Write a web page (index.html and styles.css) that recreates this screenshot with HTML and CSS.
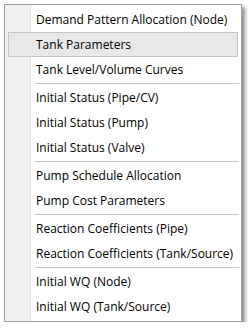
FILE: index.html
```html
<!DOCTYPE html>
<html lang="en">
<head>
  <meta charset="UTF-8" />
  <title>Context menu</title>
  <link rel="stylesheet" href="styles.css">
</head>
<body>
  <div class="menu" role="menu">
    <div class="item" role="menuitem">Demand Pattern Allocation (Node)</div>
    <div class="item active" role="menuitem">Tank Parameters</div>
    <div class="item" role="menuitem">Tank Level/Volume Curves</div>
    <div class="sep"></div>
    <div class="item" role="menuitem">Initial Status (Pipe/CV)</div>
    <div class="item" role="menuitem">Initial Status (Pump)</div>
    <div class="item" role="menuitem">Initial Status (Valve)</div>
    <div class="sep"></div>
    <div class="item" role="menuitem">Pump Schedule Allocation</div>
    <div class="item" role="menuitem">Pump Cost Parameters</div>
    <div class="sep"></div>
    <div class="item" role="menuitem">Reaction Coefficients (Pipe)</div>
    <div class="item" role="menuitem">Reaction Coefficients (Tank/Source)</div>
    <div class="sep"></div>
    <div class="item" role="menuitem">Initial WQ (Node)</div>
    <div class="item" role="menuitem">Initial WQ (Tank/Source)</div>
  </div>
</body>
</html>
```

FILE: styles.css
```css
body {
  margin: 4px;
  background: #fff;
  font-family: 'Open Sans', sans-serif;
  font-size: 12px;
  color: #000;
}
.menu {
  width: 232px;
  padding: 2px;
  border: 1px solid #a0a0a0;
  display: flex;
  flex-direction: column;
  /* gutter of the icon column */
  background: linear-gradient(to right, #f0f0f0 0 25px, #e3e3e3 25px 26px, #fff 26px);
  box-shadow: 3px 3px 4px rgba(0,0,0,0.45);
}
.item {
  height: 23px;
  line-height: 23px;
  margin: 0 1px;
  padding-left: 27px;
  border: 1px solid transparent;
  white-space: nowrap;
}
.item.active {
  background: #e8e8e8;
  border-color: #c4c4c4;
}
.sep {
  height: 1px;
  margin: 1px 0 1px 28px;
  background: #c4c4c4;
}
```
